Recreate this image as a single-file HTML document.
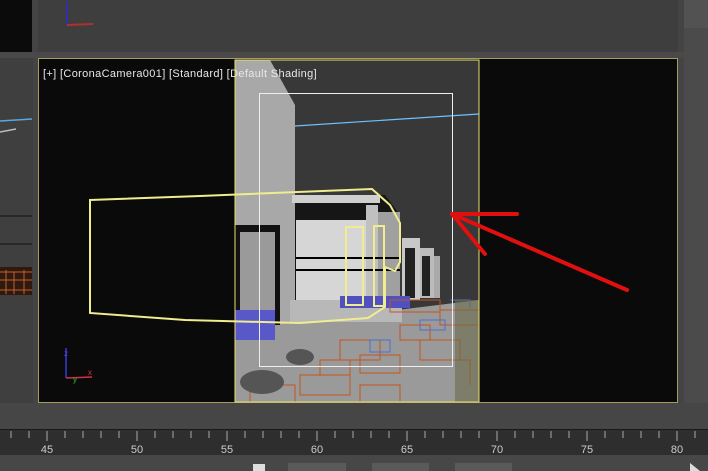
<!DOCTYPE html>
<html><head><meta charset="utf-8"><style>
html,body{margin:0;padding:0;width:708px;height:471px;overflow:hidden;background:#444;font-family:"Liberation Sans",sans-serif}
.a{position:absolute}
</style></head><body>
<div class="a" style="left:0;top:0;width:32px;height:52px;background:#0b0b0b"></div>
<div class="a" style="left:38px;top:0;width:640px;height:52px;background:#3e3e3e"></div>
<div class="a" style="left:0;top:52px;width:684px;height:6px;background:#4a4848"></div>
<div class="a" style="left:684px;top:0;width:24px;height:28px;background:#525252"></div>
<div class="a" style="left:684px;top:28px;width:24px;height:400px;background:#4b4b4b"></div>
<div class="a" style="left:0;top:58px;width:33px;height:345px;background:#3f3f3f"></div>
<div class="a" style="left:38px;top:58px;width:638px;height:343px;background:#0a0a0a;border:1px solid #a39d5e"></div>
<div class="a" style="left:0;top:403px;width:708px;height:26px;background:#464646"></div>
<div class="a" style="left:0;top:429px;width:708px;height:26px;background:#2e2e2e;border-top:1px solid #1a1a1a"></div>
<div class="a" style="left:0;top:455px;width:708px;height:16px;background:#474747"></div>
<svg class="a" style="left:0;top:0" width="708" height="471">
<line x1="67" y1="2" x2="67" y2="25" stroke="#3030b0" stroke-width="2"/>
<line x1="67" y1="25" x2="93" y2="24" stroke="#b03030" stroke-width="2"/>
<line x1="0" y1="121" x2="32" y2="119" stroke="#5aa8e0" stroke-width="1.5"/>
<path d="M0 132 L16 129" stroke="#bbb" stroke-width="1.5"/>
<line x1="0" y1="216" x2="32" y2="216" stroke="#111"/>
<line x1="0" y1="244" x2="32" y2="244" stroke="#111"/>
<rect x="0" y="267" width="32" height="28" fill="#301a10"/>
<path d="M0 272h32M0 280h32M0 290h32M6 270v24M14 272v22M24 270v24" stroke="#c0602a" stroke-width="1"/>
<!-- render image -->
<rect x="235" y="60" width="244" height="342" fill="#383838"/>
<polygon points="235,60 270,60 295,105 295,402 235,402" fill="#a8a8a8"/>
<polygon points="235,330 479,300 479,402 235,402" fill="#9a9a9a"/>
<!-- main building -->
<polygon points="295,195 385,195 400,215 400,320 295,322" fill="#161616"/>
<rect x="296" y="220" width="70" height="95" fill="#d6d6d6"/>
<rect x="366" y="205" width="12" height="115" fill="#c0c0c0"/>
<rect x="378" y="212" width="22" height="108" fill="#a0a0a0"/>
<rect x="292" y="195" width="88" height="8" fill="#cfcfcf"/>
<line x1="296" y1="258" x2="400" y2="258" stroke="#000" stroke-width="2"/>
<line x1="296" y1="270" x2="400" y2="270" stroke="#000" stroke-width="2"/>
<rect x="290" y="300" width="112" height="22" fill="#b8b8b8"/>
<!-- distant buildings -->
<rect x="402" y="238" width="18" height="62" fill="#c8c8c8"/><rect x="405" y="248" width="10" height="50" fill="#222"/>
<rect x="420" y="248" width="14" height="50" fill="#bbb"/><rect x="422" y="256" width="8" height="40" fill="#222"/>
<rect x="434" y="256" width="6" height="42" fill="#aaa"/>
<rect x="235" y="225" width="45" height="100" fill="#111"/>
<rect x="240" y="232" width="35" height="90" fill="#9a9a9a"/>
<rect x="235" y="310" width="40" height="30" fill="#5858c8"/>
<rect x="340" y="296" width="70" height="12" fill="#5050c0"/>
<g stroke="#c0561e" stroke-width="1" fill="none">
<path d="M340 340h40v20h-40zM360 355h40v18h-40zM300 375h50v20h-50zM250 385h45v17h-45zM400 325h30v15h-30zM420 340h40v20h-40zM440 310h39v15h-39zM320 360h30v15h-30zM360 385h40v17h-40zM390 300h50v12h-50zM430 360h40v25"/>
</g>
<g stroke="#4a70d0" stroke-width="1" fill="none"><path d="M370 340h20v12h-20zM420 320h25v10h-25zM450 300h20v8"/></g>
<rect x="455" y="300" width="24" height="102" fill="#6a6a4a" opacity=".6"/>
<ellipse cx="262" cy="382" rx="22" ry="12" fill="#555"/>
<ellipse cx="300" cy="357" rx="14" ry="8" fill="#555"/>
<line x1="295" y1="126" x2="479" y2="114" stroke="#6ec0ff" stroke-width="1.2"/>
<rect x="259.5" y="93.5" width="193" height="273" fill="none" stroke="#eee" stroke-width="1"/>
<rect x="235" y="60" width="244" height="342" fill="none" stroke="#e8e070" stroke-width="1"/>
<path d="M90 200 L200 196 L372 189 L390 205 L400 223 L400 262 L395 271 L385 267 L385 307 L368 318 L300 323 L185 320 L90 313 Z" fill="none" stroke="#f0ec90" stroke-width="2"/>
<rect x="346" y="227" width="17" height="78" fill="none" stroke="#f0ec90" stroke-width="2"/>
<rect x="374" y="226" width="10" height="80" fill="none" stroke="#f0ec90" stroke-width="2"/>
<line x1="66" y1="348" x2="66" y2="378" stroke="#3a3ad0" stroke-width="1.5"/>
<line x1="66" y1="378" x2="92" y2="377" stroke="#d03040" stroke-width="1.5"/>
<text x="64" y="356" font-size="8" fill="#4a4ae0">z</text>
<text x="88" y="375" font-size="8" fill="#d03040">x</text>
<text x="73" y="382" font-size="8" fill="#30c030">y</text>
<g stroke="#e01010" stroke-width="4" stroke-linecap="round" fill="none">
<path d="M627 290 L452 214"/><path d="M452 214 L517 214"/><path d="M452 214 L485 254"/>
</g>
<text x="43" y="77" font-size="11" letter-spacing="0.35" fill="#e8e8e8" xml:space="preserve">[+] [CoronaCamera001] [Standard] [Default Shading]</text>
<path d="M11 431v7M29 431v7M47 431v10M65 431v7M83 431v7M101 431v7M119 431v7M137 431v10M155 431v7M173 431v7M191 431v7M209 431v7M227 431v10M245 431v7M263 431v7M281 431v7M299 431v7M317 431v10M335 431v7M353 431v7M371 431v7M389 431v7M407 431v10M425 431v7M443 431v7M461 431v7M479 431v7M497 431v10M515 431v7M533 431v7M551 431v7M569 431v7M587 431v10M605 431v7M623 431v7M641 431v7M659 431v7M677 431v10M695 431v7" stroke="#aaa"/>
<g font-size="11" fill="#ccc" text-anchor="middle">
<text x="47" y="453">45</text><text x="137" y="453">50</text><text x="227" y="453">55</text><text x="317" y="453">60</text><text x="407" y="453">65</text><text x="497" y="453">70</text><text x="587" y="453">75</text><text x="677" y="453">80</text>
</g>
<rect x="288" y="463" width="58" height="8" fill="#5a5a5a"/>
<rect x="372" y="463" width="57" height="8" fill="#5a5a5a"/>
<rect x="455" y="463" width="57" height="8" fill="#5a5a5a"/>
<rect x="253" y="464" width="12" height="7" fill="#ddd"/>
<path d="M690 471 L690 463 L700 471Z" fill="#ddd"/>
</svg>
</body></html>
